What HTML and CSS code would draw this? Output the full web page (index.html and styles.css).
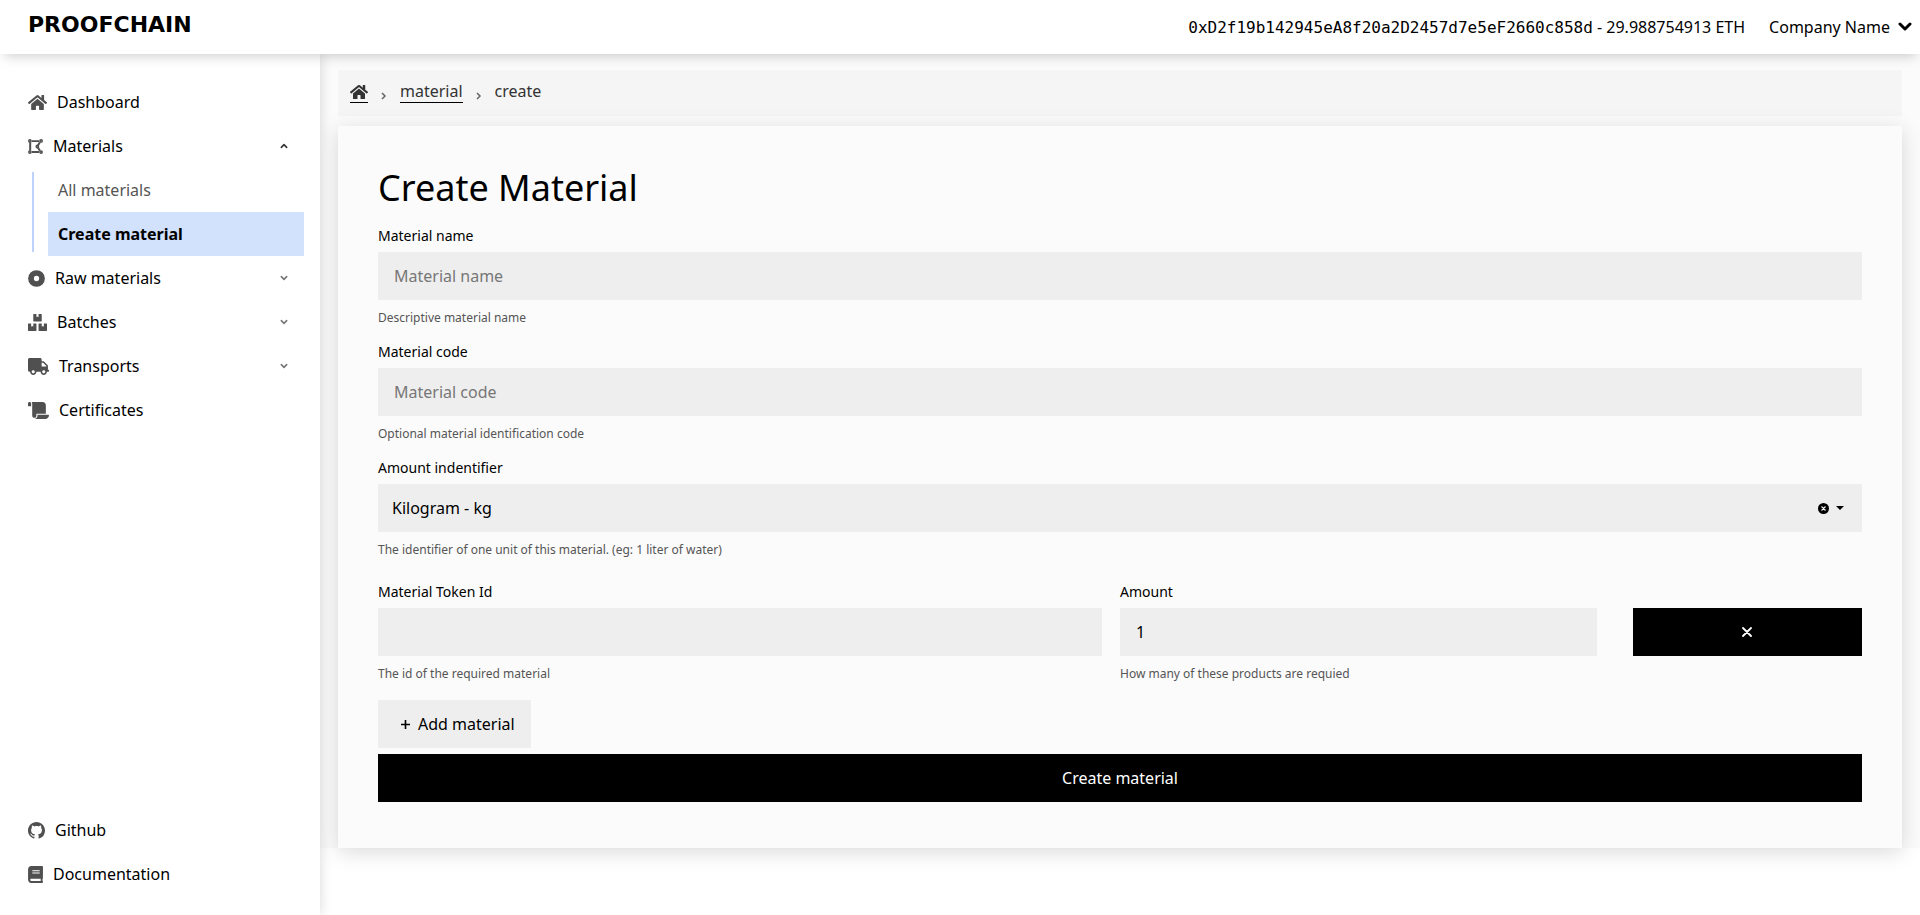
FILE: index.html
```html
<!DOCTYPE html>
<html lang="en">
<head>
<meta charset="utf-8">
<title>Proofchain - Create Material</title>
<link rel="stylesheet" href="styles.css">
</head>
<body>
<svg class="sprite" aria-hidden="true">
  <symbol id="home" viewBox="0 0 576 512"><path d="M280.37 148.26L96 300.11V464a16 16 0 0 0 16 16l112.06-.29a16 16 0 0 0 15.92-16V368a16 16 0 0 1 16-16h64a16 16 0 0 1 16 16v95.64a16 16 0 0 0 16 16.05L464 480a16 16 0 0 0 16-16V300L295.67 148.26a12.19 12.19 0 0 0-15.3 0zM571.6 251.47L488 182.56V44.05a12 12 0 0 0-12-12h-56a12 12 0 0 0-12 12v72.61L318.47 43a48 48 0 0 0-61 0L4.34 251.47a12 12 0 0 0-1.6 16.9l25.5 31A12 12 0 0 0 45.15 301l235.22-193.74a12.19 12.19 0 0 1 15.3 0L530.9 301a12 12 0 0 0 16.9-1.6l25.5-31a12 12 0 0 0-1.7-16.93z"/></symbol>
  <symbol id="chevron" viewBox="0 0 12 8"><path d="M2 2l4 4 4-4" fill="none" stroke="currentColor" stroke-width="2.4" stroke-linecap="round" stroke-linejoin="round"/></symbol>
</svg>

<header class="topbar">
  <a class="logo" href="#">PROOFCHAIN</a>
  <div class="account">
    <span><span class="address">0xD2f19b142945eA8f20a2D2457d7e5eF2660c858d</span> - 29.988754913 ETH</span>
    <button class="company" type="button">Company Name
      <svg class="company-arrow" viewBox="0 0 14 10"><path d="M2 2l5 5 5-5" fill="none" stroke="currentColor" stroke-width="3" stroke-linecap="round" stroke-linejoin="round"/></svg>
    </button>
  </div>
</header>

<div class="layout">
  <nav class="sidebar">
    <div class="menu">
      <a class="item" href="#"><svg class="icon w19"><use href="#home"/></svg>Dashboard</a>
      <button class="item" type="button" aria-expanded="true">
        <svg class="icon w15" viewBox="0 0 448 512"><g fill="none" stroke="currentColor"><path stroke-width="60" d="M64 130v252M118 94h216M118 418h216M358 130l-72 112M286 270l72 112"/><g stroke-width="46"><circle cx="56" cy="88" r="34"/><circle cx="392" cy="88" r="34"/><circle cx="56" cy="424" r="34"/><circle cx="392" cy="424" r="34"/><circle cx="280" cy="256" r="34"/></g></g></svg>Materials
        <svg class="arrow arrow-up"><use href="#chevron"/></svg>
      </button>
      <div class="submenu">
        <a class="subitem" href="#">All materials</a>
        <a class="subitem active" href="#">Create material</a>
      </div>
      <button class="item" type="button" aria-expanded="false">
        <svg class="icon w17" viewBox="0 0 512 512"><circle cx="256" cy="256" r="166" fill="none" stroke="currentColor" stroke-width="172"/></svg>Raw materials
        <svg class="arrow"><use href="#chevron"/></svg>
      </button>
      <button class="item" type="button" aria-expanded="false">
        <svg class="icon w19" viewBox="0 0 576 512"><path d="M560 288h-80v96l-32-21.3-32 21.3v-96h-80c-8.8 0-16 7.2-16 16v192c0 8.8 7.2 16 16 16h224c8.8 0 16-7.2 16-16V304c0-8.8-7.2-16-16-16zm-384-64h224c8.8 0 16-7.2 16-16V16c0-8.8-7.2-16-16-16h-80v96l-32-21.3L256 96V0h-80c-8.8 0-16 7.2-16 16v192c0 8.8 7.2 16 16 16zm64 64h-80v96l-32-21.3L96 384v-96H16c-8.8 0-16 7.2-16 16v192c0 8.8 7.2 16 16 16h224c8.8 0 16-7.2 16-16V304c0-8.8-7.2-16-16-16z"/></svg>Batches
        <svg class="arrow"><use href="#chevron"/></svg>
      </button>
      <button class="item" type="button" aria-expanded="false">
        <svg class="icon w21" viewBox="0 0 640 512"><path d="M624 352h-16V243.9c0-12.7-5.1-24.9-14.1-33.9L494 110.1c-9-9-21.2-14.1-33.9-14.1H416V48c0-26.5-21.5-48-48-48H48C21.5 0 0 21.5 0 48v320c0 26.5 21.5 48 48 48h16c0 53 43 96 96 96s96-43 96-96h128c0 53 43 96 96 96s96-43 96-96h48c8.8 0 16-7.2 16-16v-32c0-8.8-7.2-16-16-16zM160 464c-26.5 0-48-21.5-48-48s21.5-48 48-48 48 21.5 48 48-21.5 48-48 48zm320 0c-26.5 0-48-21.5-48-48s21.5-48 48-48 48 21.5 48 48-21.5 48-48 48zm80-208H416V144h44.1l99.9 99.9V256z"/></svg>Transports
        <svg class="arrow"><use href="#chevron"/></svg>
      </button>
      <a class="item" href="#"><svg class="icon w21" viewBox="0 0 640 512"><path d="M48 0C21.53 0 0 21.53 0 48v64c0 8.84 7.16 16 16 16h80V48C96 21.53 74.47 0 48 0zm208 412.57V352h288V96c0-52.94-43.06-96-96-96H111.59C121.74 13.41 128 29.92 128 48v368c0 38.87 34.65 69.65 74.75 63.12C234.22 474 256 444.46 256 412.57zM288 384v32c0 52.93-43.06 96-96 96h336c61.86 0 112-50.14 112-112 0-8.84-7.16-16-16-16H288z"/></svg>Certificates</a>
    </div>
    <div class="menu">
      <a class="item" href="#"><svg class="icon w17" viewBox="0 0 16 16"><path d="M8 0C3.58 0 0 3.58 0 8c0 3.54 2.29 6.53 5.47 7.59.4.07.55-.17.55-.38 0-.19-.01-.82-.01-1.49-2.01.37-2.53-.49-2.69-.94-.09-.23-.48-.94-.82-1.13-.28-.15-.68-.52-.01-.53.63-.01 1.08.58 1.23.82.72 1.21 1.87.87 2.33.66.07-.52.28-.87.51-1.07-1.78-.2-3.64-.89-3.64-3.95 0-.87.31-1.59.82-2.15-.08-.2-.36-1.02.08-2.12 0 0 .67-.21 2.2.82.64-.18 1.32-.27 2-.27s1.36.09 2 .27c1.53-1.04 2.2-.82 2.2-.82.44 1.1.16 1.92.08 2.12.51.56.82 1.27.82 2.15 0 3.07-1.87 3.75-3.65 3.95.29.25.54.73.54 1.48 0 1.07-.01 1.93-.01 2.2 0 .21.15.46.55.38A8.01 8.01 0 0 0 16 8c0-4.42-3.58-8-8-8z"/></svg>Github</a>
      <a class="item" href="#"><svg class="icon w15" viewBox="0 0 448 512"><path d="M448 360V24c0-13.3-10.7-24-24-24H96C43 0 0 43 0 96v320c0 53 43 96 96 96h328c13.3 0 24-10.7 24-24v-16c0-7.5-3.5-14.3-8.9-18.7-4.2-15.4-4.2-59.3 0-74.7 5.4-4.3 8.9-11.1 8.9-18.6zM128 134c0-3.3 2.7-6 6-6h212c3.3 0 6 2.7 6 6v20c0 3.3-2.7 6-6 6H134c-3.3 0-6-2.7-6-6v-20zm0 64c0-3.3 2.7-6 6-6h212c3.3 0 6 2.7 6 6v20c0 3.3-2.7 6-6 6H134c-3.3 0-6-2.7-6-6v-20zm253.4 250H96c-17.7 0-32-14.3-32-32 0-17.6 14.4-32 32-32h285.4c-1.9 17.1-1.9 46.9 0 64z"/></svg>Documentation</a>
    </div>
  </nav>

  <main class="content">
    <nav class="breadcrumb" aria-label="Breadcrumb">
      <a class="crumb" href="#" aria-label="Home"><svg class="crumb-icon"><use href="#home"/></svg></a>
      <svg class="separator" viewBox="0 0 6 8"><path d="M1 1l3 3-3 3" fill="none" stroke="currentColor" stroke-width="1.5"/></svg>
      <a class="crumb" href="#">material</a>
      <svg class="separator" viewBox="0 0 6 8"><path d="M1 1l3 3-3 3" fill="none" stroke="currentColor" stroke-width="1.5"/></svg>
      <span class="crumb-current">create</span>
    </nav>

    <form class="card">
      <h1 class="title">Create Material</h1>
      <div class="field">
        <label class="label" for="name">Material name</label>
        <input class="control" id="name" type="text" placeholder="Material name">
        <p class="help">Descriptive material name</p>
      </div>
      <div class="field">
        <label class="label" for="code">Material code</label>
        <input class="control" id="code" type="text" placeholder="Material code">
        <p class="help">Optional material identification code</p>
      </div>
      <div class="field">
        <label class="label" for="unit">Amount indentifier</label>
        <div class="select-wrap">
          <select class="control select" id="unit"><option>Kilogram - kg</option></select>
          <div class="select-tools">
            <button class="clear" type="button" aria-label="Clear selection"><svg class="clear-icon" viewBox="0 0 11 11"><circle cx="5.5" cy="5.5" r="5.5"/><path d="M3.5 3.5l4 4M7.5 3.5l-4 4" stroke="#eee" stroke-width="1.2"/></svg></button>
            <svg class="caret" viewBox="0 0 8 4"><path d="M0 0h8L4 4z"/></svg>
          </div>
        </div>
        <p class="help">The identifier of one unit of this material. (eg: 1 liter of water)</p>
      </div>
      <div class="row">
        <div class="field">
          <label class="label" for="token">Material Token Id</label>
          <input class="control" id="token" type="text">
          <p class="help">The id of the required material</p>
        </div>
        <div class="field">
          <label class="label" for="amount">Amount</label>
          <input class="control" id="amount" type="text" inputmode="numeric" value="1">
          <p class="help">How many of these products are requied</p>
        </div>
        <button class="btn dark remove" type="button" aria-label="Remove material"><svg class="glyph" viewBox="0 0 10 10"><path d="M1 1l8 8M9 1l-8 8" stroke="currentColor" stroke-width="1.8" stroke-linecap="round"/></svg></button>
      </div>
      <button class="btn light" type="button"><svg class="glyph" viewBox="0 0 10 10"><path d="M5 0v10M0 5h10" stroke="currentColor" stroke-width="1.8"/></svg>Add material</button>
      <button class="btn dark" type="submit">Create material</button>
    </form>
  </main>
</div>
</body>
</html>
```

FILE: styles.css
```css
* { box-sizing: border-box; }
body {
  margin: 0;
  min-height: 100vh;
  display: flex;
  flex-direction: column;
  background: #fff;
  color: #000;
  font: 16px/24px "Noto Sans", sans-serif;
}
button, input, select { font: inherit; color: inherit; border: 0; border-radius: 0; margin: 0; }
button { background: none; padding: 0; cursor: pointer; }
a { color: inherit; text-decoration: none; }
svg { display: block; fill: currentColor; flex: none; }
.sprite { position: absolute; width: 0; height: 0; }

.topbar {
  position: relative;
  z-index: 2;
  height: 54px;
  padding: 0 8px 0 28px;
  display: flex;
  align-items: center;
  justify-content: space-between;
  background: #fff;
  box-shadow: 0 6px 12px -4px rgba(0, 0, 0, .2);
}
.logo { font: 700 22px/24px "DejaVu Sans", sans-serif; padding-bottom: 4px; }
.account { display: flex; align-items: center; gap: 24px; }
.address { font-family: "DejaVu Sans Mono", monospace; }
.company { display: flex; align-items: center; gap: 8px; }
.company-arrow { width: 14px; height: 10px; }

.layout { flex: 1; display: flex; align-items: stretch; }
.sidebar {
  flex: 0 0 320px;
  display: flex;
  flex-direction: column;
  justify-content: space-between;
  padding: 26px 16px 19px;
  background: #fff;
  position: relative;
  z-index: 1;
  box-shadow: 0 0 12px rgba(0, 0, 0, .16);
}
.menu { display: flex; flex-direction: column; }
.item {
  display: flex;
  align-items: center;
  gap: 10px;
  padding: 10px 12px;
  text-align: left;
}
.icon { height: 17px; color: #505050; }
.w15 { width: 15px; }
.w17 { width: 17px; }
.w19 { width: 19px; }
.w21 { width: 21px; }
.arrow { width: 8px; height: 6px; margin: 0 4px 0 auto; color: #777; }
.arrow-up { transform: rotate(180deg); color: #333; }
.submenu {
  margin-left: 16px;
  padding-left: 16px;
  background: linear-gradient(#bdd3fb, #bdd3fb) left center / 2px calc(100% - 8px) no-repeat;
}
.subitem { display: block; padding: 10px; color: #555; }
.subitem.active { background: #d2e1fc; color: #000; font-weight: 700; }

.content {
  flex: 1;
  min-width: 0;
  align-self: flex-start;
  padding: 16px 18px 0;
  background: #fbfbfb;
}
.breadcrumb {
  display: flex;
  align-items: flex-start;
  gap: 13px;
  padding: 11px 12px 13px;
  margin-bottom: 10px;
  background: #f5f5f5;
  color: #333;
  line-height: 21px;
}
.crumb { border-bottom: 1px solid #000; }
.crumb-icon { width: 18px; height: 16px; margin: 3px 0 2px; }
.separator { width: 6px; height: 8px; margin-top: 11px; color: #666; }

.card {
  display: flex;
  flex-direction: column;
  padding: 40px 40px 46px;
  background: #fbfbfb;
  box-shadow: 0 4px 20px rgba(0, 0, 0, .15);
}
.title { margin: 0 0 16px; font-size: 36px; line-height: 44px; font-weight: 400; }
.field { margin-bottom: 16px; min-width: 0; }
.label { display: block; font-size: 14px; line-height: 20px; margin-bottom: 6px; }
.control {
  display: block;
  width: 100%;
  height: 48px;
  padding: 0 16px;
  background: #eee;
}
.control::placeholder { color: #777; opacity: 1; }
.help { margin: 10px 0 0; font-size: 12px; line-height: 16px; color: #555; }
.select-wrap { position: relative; }
.select { appearance: none; padding: 0 14px; }
.select-tools {
  position: absolute;
  inset: 0 18px 0 auto;
  display: flex;
  align-items: center;
  gap: 7px;
}
.clear-icon { width: 11px; height: 11px; }
.caret { width: 8px; height: 4px; }

.row {
  display: grid;
  grid-template-columns: minmax(0, 3fr) minmax(0, 2fr) minmax(0, 1fr);
  margin: 8px 0 2px;
}
.row .field { padding-right: 18px; }
.btn {
  height: 48px;
  display: flex;
  align-items: center;
  justify-content: center;
  gap: 8px;
}
.dark { background: #000; color: #fff; }
.light { align-self: flex-start; padding: 0 16px 0 23px; background: #eee; margin-bottom: 6px; }
.remove { margin: 26px 0 0 18px; }
.glyph { width: 10px; height: 10px; }
.light .glyph { width: 9px; height: 9px; }
```
